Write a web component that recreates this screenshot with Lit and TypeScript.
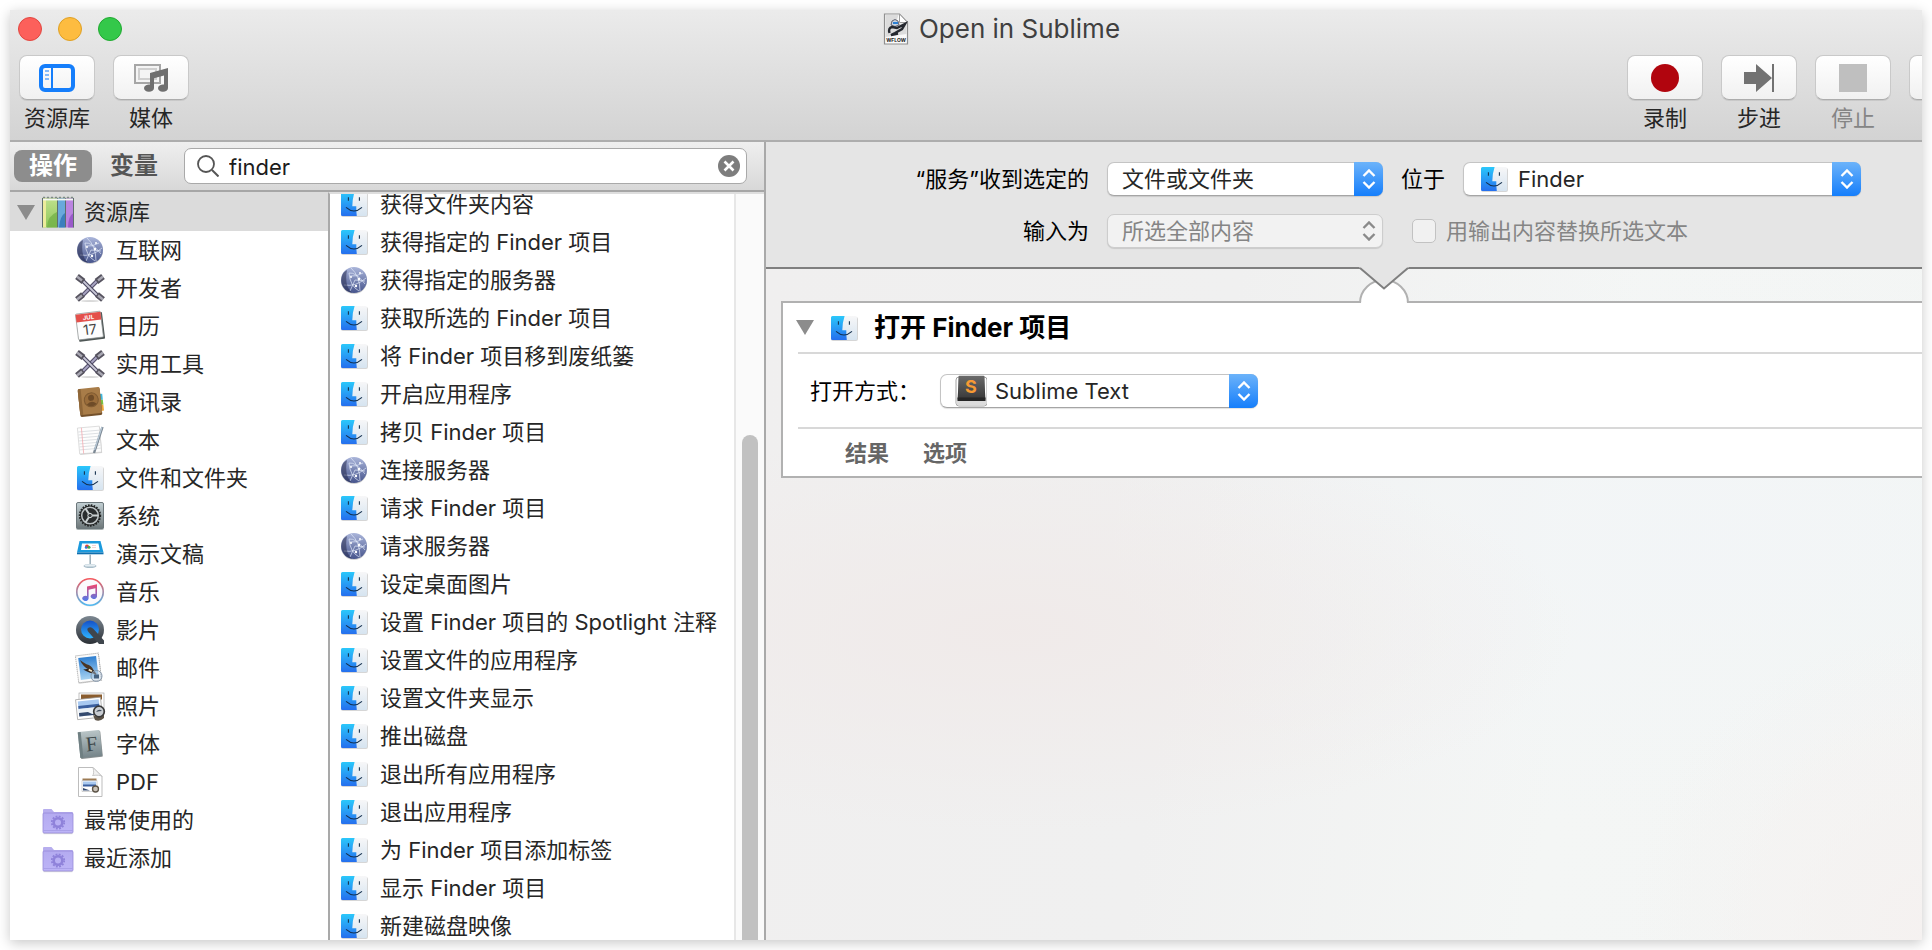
import { LitElement, html, css, svg, type SVGTemplateResult, type TemplateResult } from "lit";
import { customElement, state } from "lit/decorators.js";
import { classMap } from "lit/directives/class-map.js";

/* Artwork: every icon is drawn on a 32 x 32 grid. */
const art: Record<string, SVGTemplateResult> = {
  finder: svg`
    <rect x="3" y="5" width="27" height="24" rx="2" fill="#000" opacity=".16"/>
    <rect x="3" y="4" width="26" height="24" rx="1.500" fill="url(#g-face)"/>
    <path d="M4.500 4H16.600Q14.500 10 14.300 18.300H18.300Q18.200 23.500 18.800 28H4.500Q3 28 3 26.500V5.500Q3 4 4.500 4Z" fill="url(#g-blue)"/>
    <path d="M10.400 9.300v3.400M21.400 9.300v3.400" stroke="#173450" stroke-width="1.100"/>
    <path d="M8 19.400Q16 26.500 24 19.400" fill="none" stroke="#14304e" stroke-width="1.100"/>`,
  globe: svg`
    <circle cx="16" cy="17" r="13" fill="#000" opacity=".18"/>
    <circle cx="16" cy="16" r="13" fill="url(#g-globe)"/>
    <g fill="none" stroke="#e4ebfa" stroke-width=".8" opacity=".85">
      <path d="M11 9Q18 8 27 20M13 4Q22 12 22 27M12 12Q18 13 25 9M11 9Q12 22 21 27M6 21Q18 23 28 14M17 16L27 17M17 16L12 27"/>
    </g>
    <g fill="#fff"><circle cx="13" cy="13" r="1"/><circle cx="21" cy="15" r="1.200"/><circle cx="18" cy="22" r="1.200"/><circle cx="22" cy="9" r="1"/></g>
    <path d="M4 12A13 13 0 0 0 14 29Q6 22 9 6Q5 8 4 12Z" fill="#1f2446" opacity=".5"/>`,
  tools: svg`
    <ellipse cx="16" cy="29" rx="9" ry="1" fill="#000" opacity=".15"/>
    <g stroke-linecap="butt">
      <path d="M7 25L25 7" stroke="#55506b" stroke-width="4"/><path d="M7 25L25 7" stroke="#aaa6c4" stroke-width="1.800"/>
      <path d="M7 7L25 25" stroke="#4b4760" stroke-width="4"/><path d="M7 7L25 25" stroke="#c9c7d6" stroke-width="1.800"/>
      <path d="M3 4.500L9.500 9.500M29 4.500L22.500 9.500M3 27.500L9 22.500M29 27.500L23 22.500" stroke="#56535f" stroke-width="6"/>
      <path d="M3 4.500L8 8.500M29 4.500L24 8.500M3 27.500L8 23.500M29 27.500L24 23.500" stroke="#a9a8b3" stroke-width="2.400"/>
    </g>`,
  calendar: svg`
    <g transform="rotate(-7 16 16)">
      <rect x="3.500" y="3.500" width="26" height="27" rx="1" fill="#4e5655"/>
      <rect x="3" y="2.500" width="25" height="26" rx="1" fill="#fdfdfd" stroke="#8b9190" stroke-width=".7"/>
      <path d="M3 3h25v8H3z" fill="#e4504b"/>
      <text x="15.500" y="9.500" font-size="6" font-weight="700" text-anchor="middle" fill="#fff">JUL</text>
      <text x="15.500" y="24.500" font-size="14" text-anchor="middle" fill="#444">17</text>
    </g>`,
  contacts: svg`
    <g transform="rotate(-6 16 16)">
      <path d="M26 9h3v6h-3z" fill="#3fb8e0"/><path d="M26 15h3v5h-3z" fill="#7ac143"/><path d="M26 20h3v6h-3z" fill="#efa73a"/>
      <rect x="5" y="3" width="22" height="27" rx="1.500" fill="#74512b"/>
      <rect x="5" y="2" width="22" height="26" rx="1.500" fill="#a87c48"/>
      <path d="M5 3.500q0-1.500 1.500-1.500H8v26H6.500Q5 28 5 26.500z" fill="#8e6638"/>
      <circle cx="17.500" cy="14" r="7" fill="#9a6d3b" stroke="#7f5a31" stroke-width="1"/>
      <circle cx="17.500" cy="12" r="3" fill="#6f4c28"/><path d="M12.500 18.500q5-5 10 0q-5 4-10 0z" fill="#6f4c28"/>
    </g>`,
  text: svg`
    <g transform="rotate(-5 16 16)">
      <rect x="5" y="4" width="22" height="26" fill="#000" opacity=".16"/>
      <rect x="4.500" y="3" width="22" height="26" fill="#fdfdfd" stroke="#c9c9c9" stroke-width=".6"/>
      <path d="M5 7h21M5 10h21M5 13h21M5 16h21M5 19h21M5 22h21M5 25h21" stroke="#c9ced4" stroke-width=".6"/>
      <path d="M8.500 3v26" stroke="#f5a3aa" stroke-width=".7"/>
    </g>
    <path d="M28.500 3L20 29" stroke="#7b8793" stroke-width="2.400"/><path d="M28 3L20.500 26" stroke="#b9cad8" stroke-width="1.200"/>`,
  system: svg`
    <rect x="2" y="3" width="28" height="27" rx="2" fill="#566" opacity=".5"/>
    <rect x="2.500" y="2.500" width="27" height="26" rx="1.500" fill="url(#g-steel)" stroke="#6c777b" stroke-width="1"/>
    <circle cx="16" cy="15.500" r="10" fill="#202222" stroke="#202222" stroke-width="2.400" stroke-dasharray="1.600 1.200"/>
    <circle cx="16" cy="15.500" r="8.300" fill="#2a2d2e" stroke="#bcc2c4" stroke-width="1.500"/>
    <path d="M16 15.500L11.500 8.500M16 15.500H24M16 15.500L11.500 22.500" stroke="#c9cfd0" stroke-width="2"/>
    <circle cx="16" cy="15.500" r="2.200" fill="#3a3e40" stroke="#d5dadb" stroke-width="1"/>`,
  keynote: svg`
    <path d="M5.500 3h21l3 11.500H3z" fill="#1b9add"/><path d="M3 14.500h26.500v1.800H3z" fill="#0f6fae"/>
    <path d="M8 5.500h16.500l1.200 6.500H7z" fill="#fff"/>
    <circle cx="13" cy="8.500" r="2" fill="#e2453c"/><circle cx="15" cy="9.300" r="1.500" fill="#3fae49"/><circle cx="12" cy="9.500" r="1.200" fill="#2c7be5"/>
    <path d="M18 7.500h4M18 9.500h4" stroke="#f0c9c9" stroke-width=".8"/>
    <path d="M15.400 16.500h1.600v10.500h-1.600z" fill="#9fb2bd"/><ellipse cx="16" cy="28" rx="6.500" ry="2" fill="#a9bdc9"/><ellipse cx="16" cy="27.400" rx="5.500" ry="1.200" fill="#e4edf2"/>`,
  music: svg`
    <circle cx="16" cy="16.500" r="14" fill="#000" opacity=".12"/>
    <circle cx="16" cy="16" r="13.200" fill="#fbfafc" stroke="url(#g-tune)" stroke-width="1.600"/>
    <path d="M13 10.500L23 8.200V20.500a3.200 2.600 0 1 1-1.600-2.400V12.200L14.600 13.800V22.500a3.200 2.600 0 1 1-1.600-2.400z" fill="url(#g-tune2)"/>`,
  quicktime: svg`
    <circle cx="16" cy="16" r="14" fill="url(#g-rim)"/>
    <circle cx="16" cy="15.500" r="9" fill="url(#g-qt)"/>
    <path d="M14 14Q17 12 19.500 15L30 26.500V30H25L14.500 18Q12.500 15.500 14 14Z" fill="#3f464d"/>`,
  mail: svg`
    <g transform="rotate(-7 14 16)">
      <rect x="3.500" y="3.500" width="23" height="27" fill="#000" opacity=".2"/>
      <rect x="3" y="2.500" width="23" height="27" fill="#fbfbfb" stroke="#aaa" stroke-width="1" stroke-dasharray="1.200 .8"/>
      <rect x="5.500" y="5" width="18" height="22" fill="url(#g-sky)"/>
      <path d="M7 7Q9 14 15 18L22 25L19 18Q18 14 13 12Q10 10 7 7Z" fill="#4b3523"/>
      <path d="M9 17Q14 16 19 19L22 23Q15 22 9 17Z" fill="#2f2219"/><path d="M15 17l3 2-1 1.500-3-2z" fill="#f1e2bf"/>
    </g>
    <circle cx="22.500" cy="24" r="6" fill="#b8ccdf" opacity=".45"/><circle cx="22.500" cy="24" r="5.500" fill="none" stroke="#7d8ea1" stroke-width=".8"/>
    <path d="M20 22.500h5v4h-5z" fill="#45617f"/>`,
  photos: svg`
    <rect x="5" y="3" width="25" height="18" fill="#fff" stroke="#999" stroke-width=".6"/><path d="M7 4.500h21v5H7z" fill="#8a5c2e"/>
    <g transform="rotate(-6 14 18)"><rect x="2.500" y="8.500" width="25" height="20" fill="#fff" stroke="#999" stroke-width=".7"/>
      <path d="M4.500 10.500h21v15h-21z" fill="#a9c9f0"/><path d="M4.500 15h21v3h-21z" fill="#3b5f9e"/><path d="M4.500 18h21v7.500h-21z" fill="#eaf0f5"/><path d="M4.500 22h9l4 2.500h8v1h-21z" fill="#33496e"/></g>
    <path d="M19 25q7 4 11-1v4q-4 4-9 2z" fill="#5c5347"/><circle cx="25" cy="21.500" r="5.300" fill="#c9cdd2" stroke="#3a3a3a" stroke-width="1.700"/><path d="M22 22q3-4 6-1q-3 0-6 1z" fill="#3d4a59"/>`,
  fonts: svg`
    <g transform="rotate(-6 16 16)">
      <rect x="5.500" y="4" width="22" height="26" rx="1" fill="#3b4446" opacity=".6"/>
      <rect x="5" y="3" width="22" height="26" rx="1" fill="url(#g-book)"/><path d="M5 3h3v26H5z" fill="#6f7f82"/>
      <text x="17.500" y="23" font-size="21" text-anchor="middle" font-family="Liberation Serif, serif" fill="#3c4749">F</text>
    </g>`,
  pdf: svg`
    <path d="M4.500 1.500H19L28 10.500V30.500H4.500Z" fill="#fff" stroke="#bdbdbd" stroke-width="1"/>
    <path d="M19 1.500Q20.500 8 18.500 9.500Q26 8.500 28 10.500Z" fill="#f2f2f2" stroke="#bdbdbd" stroke-width=".8"/>
    <path d="M8.500 12.500h14v7h-14z" fill="#9c7a53"/><path d="M8 14.500h15v11H8z" fill="#fff" stroke="#aaa" stroke-width=".5"/>
    <path d="M9 15.500h13v4H9z" fill="#a9c9f0"/><path d="M9 18.500h13v2H9z" fill="#3b5f9e"/><path d="M9 22l7 2.500H9z" fill="#33496e"/>
    <circle cx="21.500" cy="23" r="3" fill="#c9c2b8" stroke="#5c5347" stroke-width="1.300"/>`,
  folder: svg`
    <path d="M1.500 29h29v1.200H1.500z" fill="#000" opacity=".14"/>
    <path d="M1 6q0-1 1-1h7.500l2.500 3H30q1 0 1 1v4H1z" fill="#b7aeee"/>
    <rect x="1" y="9" width="30" height="20" rx="1" fill="url(#g-folder)" stroke="#978bd9" stroke-width=".8"/>
    <path d="M1.500 26.500h29" stroke="#a49ae4" stroke-width=".8"/>
    <circle cx="16" cy="18.500" r="4.300" fill="none" stroke="#8f82da" stroke-width="2.600"/>
    <circle cx="16" cy="18.500" r="6.200" fill="none" stroke="#8f82da" stroke-width="1.800" stroke-dasharray="1.900 1.346"/>`,
  library: svg`
    <path d="M0.500 1.500h31V31h-31z" fill="#56704a" opacity=".35"/>
    <path d="M1 2.500h14v29H1z" fill="url(#g-green)"/><path d="M1 2.500h3v29H1z" fill="#ecec9c"/><path d="M5 31.500Q5 20 15 16v15.500z" fill="#6fae45" opacity=".7"/>
    <path d="M16 2.500h7v29h-7z" fill="#69a9dc"/><path d="M17 31.500Q18 20 23 17v14.500z" fill="#2f74b5" opacity=".8"/>
    <path d="M24 2.500h7.500v29H24z" fill="#bb84e0"/><path d="M26 31.500Q26 20 31.500 17v14.500z" fill="#9250c4" opacity=".8"/>
    <path d="M.5 2v29.500M15.500 2v29.500M23.500 2v29.500M31.500 2v29.500" stroke="#5f6f6c" stroke-width="1"/>
    <path d="M1 1.500h30" stroke="#7d8a85" stroke-width="1.600" stroke-dasharray="2 2"/><path d="M1 3.600h30" stroke="#f4f6f2" stroke-width="1.600"/>`,
  sublime: svg`
    <rect x="1" y="2" width="31" height="29" rx="3" fill="#fff" stroke="#8c8c8c" stroke-width=".8"/>
    <path d="M1.500 26.500L3 24h27l1.500 2.500v2q0 2-2 2h-26q-2 0-2-2z" fill="#dcdcdc"/>
    <path d="M4 1.500h25l1.500 23q-14.500 2-28 0z" fill="#3a3a3a"/><path d="M2.500 22.500h28v3.500h-28z" fill="#262626"/>
    <path d="M5 .8h23.500q1 0 1 1V21q0 1-1 1H4.500q-1 0-1-1V1.800q0-1 1-1z" fill="url(#g-key)"/>
    <text x="16" y="18" font-size="18" font-weight="700" text-anchor="middle" fill="#f79a33">S</text>`,
  workflow: svg`
    <path d="M4.500 1h15l8 8.500V31h-23z" fill="#fafafa" stroke="#8f8f8f" stroke-width="1.200"/>
    <path d="M5.500 2h13l-3 9 11-1v11L5.500 24z" fill="#dcdcdc"/>
    <path d="M19.500 1v8.500h8z" fill="#fff" stroke="#9c9c9c" stroke-width="1"/>
    <path d="M12 8q3-3 6 0l1 4q-4 3-8 0z" fill="#c9d3de" stroke="#445" stroke-width=".8"/><path d="M13 9h5v2h-5z" fill="#2b7fd4"/>
    <path d="M9.500 20Q8 15 12 14L17 15L25 11L22 16L15 20L11 22L18 20.500" fill="none" stroke="#25282f" stroke-width="2.400"/>
    <text x="16" y="29" font-size="5" font-weight="700" text-anchor="middle" fill="#222">WFLOW</text>`,
};

const icon = (name: string) =>
  html`<svg class="icon" viewBox="0 0 32 32" aria-hidden="true">${art[name]}</svg>`;

const glyph: Record<string, TemplateResult> = {
  library: html`<svg class="glyph" viewBox="0 0 36 28" aria-hidden="true">
    <rect x="2" y="2" width="32" height="24" rx="4" fill="none" stroke="#157efb" stroke-width="4"/>
    <path d="M13 2v24" stroke="#157efb" stroke-width="2"/>
    <path d="M6 7h4M6 11h4M6 15h4" stroke="#157efb" stroke-width="2" opacity=".5"/></svg>`,
  media: html`<svg class="glyph" viewBox="0 0 36 28" aria-hidden="true">
    <path d="M2 1h25v18H2z" fill="#f4f4f4" stroke="#a6a6a6" stroke-width="2"/>
    <path d="M6 5h17v10H6z" fill="none" stroke="#cfcfcf" stroke-width="2"/>
    <path d="M17 9L35 4V24a5 3.600 0 1 1-4-3.400V11.500L21 14.200V24a5 3.600 0 1 1-4-3.400z" fill="#6f6f6f"/></svg>`,
  record: html`<svg class="glyph" viewBox="0 0 36 28" aria-hidden="true"><circle cx="18" cy="14" r="14" fill="#b1050e"/></svg>`,
  step: html`<svg class="glyph" viewBox="0 0 36 28" aria-hidden="true">
    <path d="M3 8h12V0l16 14-16 14v-8H3z" fill="#727272"/><path d="M32 0v28" stroke="#727272" stroke-width="2"/></svg>`,
  stop: html`<svg class="glyph" viewBox="0 0 36 28" aria-hidden="true"><path d="M4 0h28v28H4z" fill="#bfbfbf"/></svg>`,
  run: html`<svg class="glyph" viewBox="0 0 36 28" aria-hidden="true"><path d="M8 0l24 14L8 28z" fill="#727272"/></svg>`,
};

const categories: [string, string][] = [
  ["globe", "互联网"], ["tools", "开发者"], ["calendar", "日历"], ["tools", "实用工具"],
  ["contacts", "通讯录"], ["text", "文本"], ["finder", "文件和文件夹"], ["system", "系统"],
  ["keynote", "演示文稿"], ["music", "音乐"], ["quicktime", "影片"], ["mail", "邮件"],
  ["photos", "照片"], ["fonts", "字体"], ["pdf", "PDF"],
];

const actions: [string, string][] = [
  ["finder", "获得文件夹内容"], ["finder", "获得指定的 Finder 项目"], ["globe", "获得指定的服务器"],
  ["finder", "获取所选的 Finder 项目"], ["finder", "将 Finder 项目移到废纸篓"], ["finder", "开启应用程序"],
  ["finder", "拷贝 Finder 项目"], ["globe", "连接服务器"], ["finder", "请求 Finder 项目"],
  ["globe", "请求服务器"], ["finder", "设定桌面图片"], ["finder", "设置 Finder 项目的 Spotlight 注释"],
  ["finder", "设置文件的应用程序"], ["finder", "设置文件夹显示"], ["finder", "推出磁盘"],
  ["finder", "退出所有应用程序"], ["finder", "退出应用程序"], ["finder", "为 Finder 项目添加标签"],
  ["finder", "显示 Finder 项目"], ["finder", "新建磁盘映像"],
];

@customElement("app-root")
export class AppRoot extends LitElement {
  @state() private query = "finder";
  @state() private tab = "操作";

  static styles = css`
    :host {
      display: block;
      box-sizing: border-box;
      height: 100vh;
      padding: 10px;
      overflow: hidden;
      background: #fff;
      color: #262626;
      font: 22px/30px Inter, "Noto Sans CJK SC", sans-serif;
    }
    *, *::before, *::after { box-sizing: border-box; }
    button, input, select { font: inherit; color: inherit; margin: 0; padding: 0; border: 0; background: none; }
    ul { list-style: none; margin: 0; padding: 0; }
    h1, h2 { margin: 0; font: inherit; }
    .defs { position: absolute; width: 0; height: 0; }
    .icon { width: 32px; height: 32px; flex: none; display: block; }
    .glyph { width: 36px; height: 28px; display: block; }

    .window { height: 100%; overflow: hidden; background: #fff; box-shadow: 0 3px 12px rgba(0, 0, 0, .22); }
    .frame { width: calc(100% + 80px); height: 100%; display: flex; flex-direction: column; }

    .chrome {
      flex: none;
      height: 132px;
      padding: 0 16px 0 8px;
      border-bottom: 2px solid #adadad;
      background: linear-gradient(#ebebeb, #d3d3d3);
    }
    .titlebar { display: grid; grid-template-columns: 1fr auto 1fr; align-items: center; height: 37px; }
    .lights { display: flex; gap: 16px; }
    .light { width: 24px; height: 24px; border-radius: 50%; border: 1px solid #e2463f; background: #fc605b; }
    .light.min { border-color: #dfa023; background: #fdbc40; }
    .light.max { border-color: #1faa30; background: #34c84a; }
    .title { display: flex; align-items: center; gap: 7px; padding-right: 4px; font-size: 26px; color: #404040; }
    .toolbar { display: flex; gap: 18px; padding: 8px 1px 0; }
    .space { flex: 1; }
    .tool { display: flex; flex-direction: column; align-items: center; gap: 3px; }
    .tool .face {
      display: grid; place-items: center; width: 76px; height: 45px;
      border: 1px solid #c9c9c9; border-bottom-color: #acacac; border-radius: 8px;
      background: linear-gradient(#fff, #f1f1f1);
      box-shadow: 0 1px 0 rgba(0, 0, 0, .08);
    }
    .tool:disabled { color: #858585; }

    .body { flex: 1; min-height: 0; display: flex; }
    .browser { flex: 0 0 756px; display: flex; flex-direction: column; border-right: 2px solid #a9a9a9; }
    .filter {
      flex: none; display: flex; align-items: center; height: 50px; padding: 0 17px 0 4px;
      border-bottom: 2px solid #a6a6a6; background: linear-gradient(#efefef, #d8d8d8);
    }
    .tab { width: 78px; height: 32px; margin-right: 3px; border-radius: 8px; font-size: 24px; font-weight: 600; color: #555; }
    .tab.on { background: #8d8d8d; color: #fff; }
    .search {
      flex: 1; display: flex; align-items: center; height: 36px; margin-left: 8px; padding: 0 6px 0 12px;
      border: 1px solid #a9a9a9; border-radius: 7px; background: #fff;
    }
    .search svg { width: 22px; height: 22px; display: block; }
    .search input { flex: 1; min-width: 0; height: 34px; padding: 2px 10px 0; outline: none; color: #1c1c1c; }

    .columns { flex: 1; min-height: 0; display: flex; }
    .sources { flex: 0 0 318px; overflow: hidden; }
    .row { display: flex; align-items: center; gap: 10px; width: 100%; height: 38px; text-align: left; white-space: nowrap; }
    .row.root { gap: 7px; height: 39px; padding: 1px 0 0 7px; background: #dbdbdb; }
    .row.root .label { padding-left: 3px; }
    .row.child { padding-left: 64px; }
    .row.smart { padding-left: 32px; }
    .triangle { width: 18px; height: 15px; display: block; flex: none; }

    .results { flex: 1; min-width: 0; display: flex; border-left: 2px solid #a9a9a9; border-top: 2px solid #dedede; }
    .actions { flex: 1; overflow: hidden; }
    .actions ul { margin-top: -9px; }
    .row.action { padding-left: 8px; }
    .track { flex: 0 0 30px; display: flex; padding: 241px 6px 0; border-left: 2px solid #e7e7e7; background: #fafafa; overflow: hidden; }
    .thumb { flex: 1; border-radius: 8px 8px 0 0; background: #c1c1c1; }

    .editor { flex: 1; min-width: 0; display: flex; flex-direction: column; color: #000; }
    .config {
      flex: none; display: grid; grid-template-columns: 323px 276px 1fr; gap: 18px; align-items: center;
      padding: 20px 0 19px; border-bottom: 2px solid #7f7f7f; background: #e5e5e5;
    }
    .config .caption { text-align: right; }
    .field { display: flex; align-items: center; gap: 18px; }
    .field.check { gap: 10px; padding-left: 11px; color: #858585; }
    .field .popup { width: 398px; }
    .box { appearance: none; width: 24px; height: 24px; border: 1px solid #c2c2c2; border-radius: 5px; background: #f1f1f1; }

    .popup { display: grid; align-items: center; height: 34px; color: #262626; }
    .popup > * { grid-area: 1 / 1; }
    .popup select {
      appearance: none; width: 100%; height: 34px; padding: 0 34px 0 14px; line-height: 30px;
      border: 1px solid #c4c4c4; border-bottom-color: #a5a5a5; border-radius: 7px; background: #fff;
      box-shadow: 0 1px 1px rgba(0, 0, 0, .12); color: inherit; opacity: 1;
    }
    .popup.pictured select { padding-left: 54px; }
    .popup .icon { margin-left: 15px; pointer-events: none; z-index: 1; }
    .cap {
      justify-self: end; display: grid; place-items: center; width: 29px; height: 34px; pointer-events: none; z-index: 1;
      border-radius: 0 7px 7px 0; color: #fff; background: linear-gradient(#6cb3fa, #157efb);
    }
    .cap svg { width: 14px; height: 20px; display: block; }
    .popup.off { color: #858585; }
    .popup.off select { background: #f2f2f2; border-color: #cdcdcd; }
    .popup.off .cap { background: none; color: #8a8a8a; }

    .canvas {
      position: relative; flex: 1; padding: 32px 0 0 15px;
      background:
        radial-gradient(ellipse 560px 200px at 20% 54%, rgba(240, 234, 233, .95), rgba(240, 238, 237, 0)),
        radial-gradient(ellipse 300px 300px at 94% 98%, rgba(245, 241, 240, .95), rgba(244, 243, 243, 0)),
        radial-gradient(ellipse 600px 300px at 75% 40%, rgba(242, 245, 247, .9), rgba(243, 245, 245, 0)),
        linear-gradient(100deg, #f0efef, #f0f0f0 35%, #f4f6f5 65%, #f3f5f4);
    }
    .link { position: absolute; left: 50%; top: -2px; width: 52px; height: 38px; margin-left: -26px; display: block; }
    .card { border: 2px solid #b1b1b1; background: #fff; }
    .card > * + * { border-top: 2px solid #d8d8d8; margin-left: 15px; }
    .head { display: flex; align-items: center; height: 49px; padding-left: 13px; }
    .head h2 { padding-left: 14px; font-size: 26px; font-weight: 700; }
    .fold { padding-right: 14px; }
    .param { display: flex; align-items: center; height: 75px; padding-left: 12px; }
    .param label { width: 130px; }
    .param .popup { width: 318px; }
    .foot { display: flex; align-items: center; gap: 34px; height: 49px; padding-left: 47px; }
    .foot button { font-weight: 600; color: #666; }
  `;

  private triangle() {
    return html`<svg class="triangle" viewBox="0 0 18 15" aria-hidden="true"><path d="M0 0h18L9 15z" fill="#8c8c8c"/></svg>`;
  }

  private tool(name: string, label: string, disabled = false) {
    return html`<button class="tool" ?disabled=${disabled}><span class="face">${glyph[name]}</span><span>${label}</span></button>`;
  }

  private popup(id: string, value: string, picture = "", off = false) {
    return html`<div class=${classMap({ popup: true, pictured: picture !== "", off })}>
      <select id=${id} ?disabled=${off}><option>${value}</option></select>
      ${picture ? icon(picture) : ""}
      <span class="cap"><svg viewBox="0 0 14 20" aria-hidden="true">
        <path d="M1.500 7L7 1.500L12.500 7M1.500 13L7 18.500L12.500 13" fill="none" stroke="currentColor" stroke-width="2.400"/>
      </svg></span>
    </div>`;
  }

  private defs() {
    const ramp = (id: string, a: string, b: string) => svg`
      <linearGradient id=${id} x1="0" y1="0" x2="0" y2="1"><stop offset="0" stop-color=${a}/><stop offset="1" stop-color=${b}/></linearGradient>`;
    return html`<svg class="defs" aria-hidden="true"><defs>
      ${ramp("g-face", "#f7f7f8", "#d6e4f0")} ${ramp("g-blue", "#2bc8fb", "#256fee")}
      ${ramp("g-globe", "#aab5da", "#46548c")} ${ramp("g-steel", "#c3d0d4", "#6d7779")}
      ${ramp("g-tune", "#f5585d", "#4db9f2")} ${ramp("g-tune2", "#f4456c", "#4a7cf0")}
      ${ramp("g-qt", "#1450c8", "#2fb4ff")} ${ramp("g-sky", "#2f7fd0", "#a6d2f2")}
      ${ramp("g-book", "#b8c4c6", "#76858a")} ${ramp("g-folder", "#b4abf0", "#bdb4f7")}
      ${ramp("g-green", "#bfe08c", "#8ec85a")} ${ramp("g-key", "#6a6a6a", "#3d3d3d")}
      ${ramp("g-rim", "#7c8791", "#2b3036")}
    </defs></svg>`;
  }

  render() {
    return html`
      ${this.defs()}
      <div class="window"><div class="frame">
        <header class="chrome">
          <div class="titlebar">
            <div class="lights">
              <button class="light" aria-label="关闭"></button>
              <button class="light min" aria-label="最小化"></button>
              <button class="light max" aria-label="缩放"></button>
            </div>
            <h1 class="title">${icon("workflow")}<span>Open in Sublime</span></h1>
          </div>
          <div class="toolbar">
            ${this.tool("library", "资源库")}${this.tool("media", "媒体")}
            <span class="space"></span>
            ${this.tool("record", "录制")}${this.tool("step", "步进")}${this.tool("stop", "停止", true)}
            <button class="tool" aria-label="运行"><span class="face">${glyph.run}</span></button>
          </div>
        </header>
        <div class="body">
          <section class="browser">
            <div class="filter">
              ${["操作", "变量"].map((t) => html`<button class=${classMap({ tab: true, on: this.tab === t })} @click=${() => (this.tab = t)}>${t}</button>`)}
              <div class="search">
                <svg viewBox="0 0 22 22" aria-hidden="true"><circle cx="9" cy="9" r="8" fill="none" stroke="#555" stroke-width="1.800"/><path d="M15 15l6.500 6.500" stroke="#555" stroke-width="2"/></svg>
                <input type="text" aria-label="搜索" .value=${this.query} @input=${(e: InputEvent) => (this.query = (e.target as HTMLInputElement).value)} />
                <button aria-label="清除" @click=${() => (this.query = "")}>
                  <svg viewBox="0 0 22 22" aria-hidden="true"><circle cx="11" cy="11" r="11" fill="#7d7d7d"/><path d="M6.500 6.500l9 9M15.500 6.500l-9 9" stroke="#fff" stroke-width="2.600"/></svg>
                </button>
              </div>
            </div>
            <div class="columns">
              <ul class="sources">
                <li><button class="row root">${this.triangle()}${icon("library")}<span class="label">资源库</span></button></li>
                ${categories.map(([i, t]) => html`<li><button class="row child">${icon(i)}<span>${t}</span></button></li>`)}
                ${["最常使用的", "最近添加"].map((t) => html`<li><button class="row smart">${icon("folder")}<span>${t}</span></button></li>`)}
              </ul>
              <div class="results">
                <div class="actions"><ul>
                  ${actions.map(([i, t]) => html`<li><button class="row action">${icon(i)}<span>${t}</span></button></li>`)}
                </ul></div>
                <div class="track"><div class="thumb"></div></div>
              </div>
            </div>
          </section>
          <main class="editor">
            <div class="config">
              <label class="caption" for="kind">“服务”收到选定的</label>
              ${this.popup("kind", "文件或文件夹")}
              <div class="field"><label for="host-app">位于</label>${this.popup("host-app", "Finder", "finder")}</div>
              <label class="caption" for="input">输入为</label>
              ${this.popup("input", "所选全部内容", "", true)}
              <div class="field check"><input class="box" type="checkbox" id="replace" disabled /><label for="replace">用输出内容替换所选文本</label></div>
            </div>
            <div class="canvas">
              <article class="card">
                <div class="head">
                  <button class="fold" aria-label="折叠">${this.triangle()}</button>${icon("finder")}
                  <h2>打开 Finder 项目</h2>
                </div>
                <div class="param"><label for="opener">打开方式：</label>${this.popup("opener", "Sublime Text", "sublime")}</div>
                <div class="foot"><button>结果</button><button>选项</button></div>
              </article>
              <svg class="link" viewBox="0 0 52 38" aria-hidden="true">
                <path d="M3 38V36A23 23 0 0 1 49 36V38z" fill="#fff"/>
                <path d="M2 36A24 23 0 0 1 50 36" fill="none" stroke="#b1b1b1" stroke-width="2"/>
                <path d="M1 0L26 22L51 0z" fill="#e5e5e5"/>
                <path d="M2 1L26 21.500L50 1" fill="none" stroke="#7f7f7f" stroke-width="2"/>
              </svg>
            </div>
          </main>
        </div>
      </div></div>`;
  }
}
